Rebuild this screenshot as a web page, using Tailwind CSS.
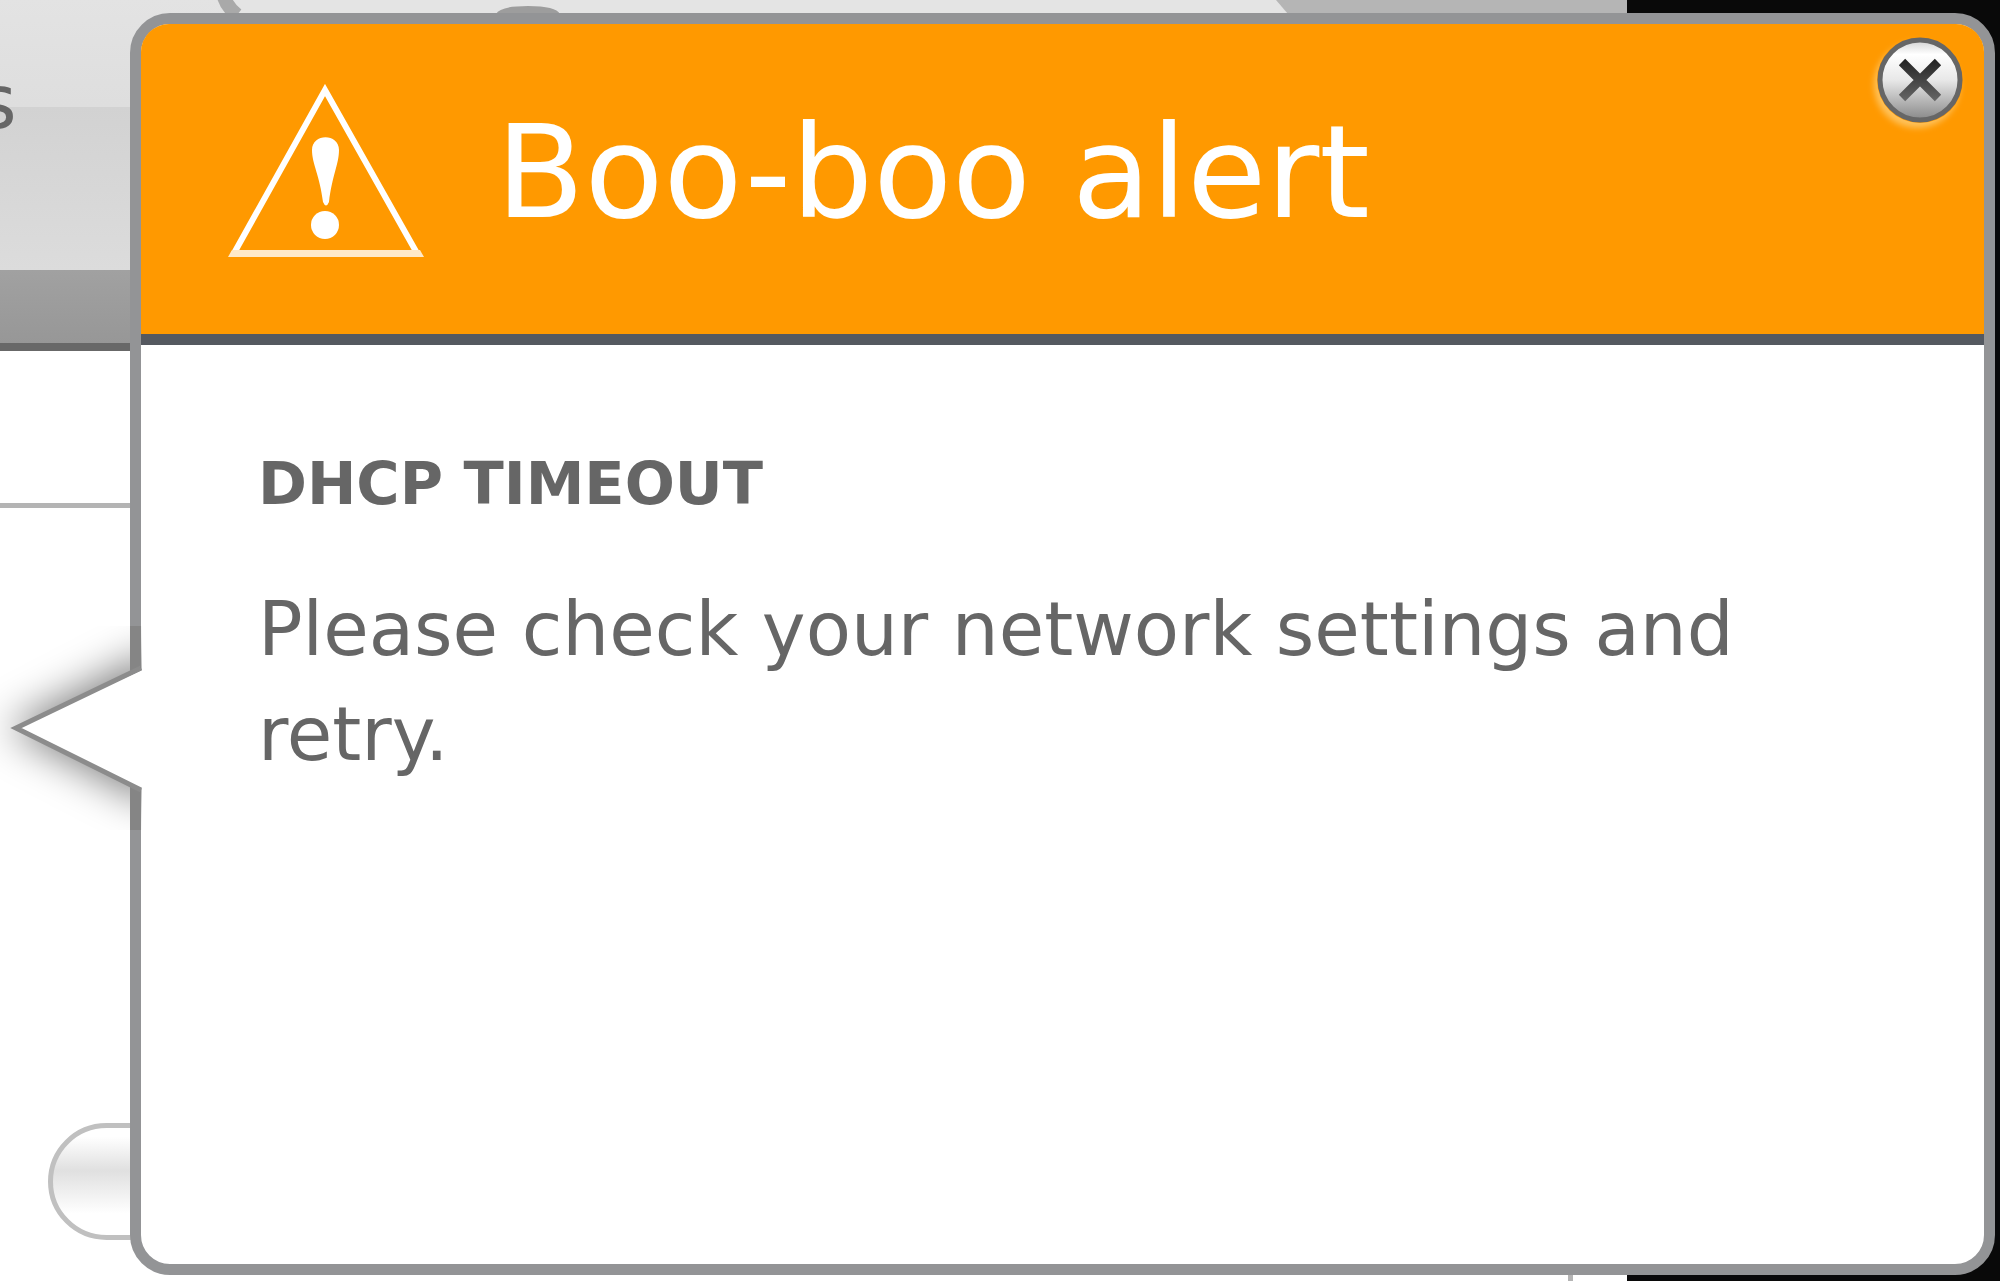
<!DOCTYPE html>
<html lang="en">
<head>
  <meta charset="UTF-8" />
  <meta name="viewport" content="width=device-width, initial-scale=1.0" />
  <title>Boo-boo alert</title>
  <script src="https://cdn.jsdelivr.net/npm/@tailwindcss/browser@4"></script>
</head>
<body class="relative flex min-h-screen overflow-x-hidden bg-white pt-[13px] pr-[5px] pb-[6px] pl-[130px] font-['DejaVu_Sans',sans-serif] text-[#666666]">

  <!-- Page behind the alert -->
  <div class="absolute inset-0 flex overflow-hidden">
    <div class="flex flex-1 flex-col">
      <!-- Tab bar -->
      <div class="relative h-[270px] shrink-0 overflow-hidden bg-linear-to-b from-[#e3e3e3] to-[#dedede] to-39%">
        <div class="mt-[107px] h-[163px] bg-linear-to-b from-[#d2d2d2] to-[#dcdcdc]"></div>
        <span class="absolute top-[65px] -left-[22px] text-[74px] leading-[74px]">s</span>
        <svg class="absolute top-0 left-0" width="1627" height="14" viewBox="0 0 1627 14" fill="none">
          <path d="M226 0h1052l8 14H240z" fill="#e4e4e4" />
          <path d="M1276 0h351v14h-339z" fill="#b5b5b5" />
          <path d="M224 -3q3 10 13 18" stroke="#a9a9a9" stroke-width="14" />
          <path d="M496 14q4-8 32-8t32 8z" fill="#9d9d9d" />
        </svg>
      </div>
      <div class="h-[81px] shrink-0 border-b-[8px] border-[#686868] bg-linear-to-b from-[#a1a1a1] to-[#979797]"></div>
      <div class="h-[157px] shrink-0 border-b-[5px] border-[#b4b4b4]"></div>
      <div class="flex flex-1 flex-col items-start justify-end pb-[41px] pl-[48px]">
        <button type="button" aria-label="Continue" class="h-[117px] w-[300px] rounded-full border-[5px] border-[#c0c0c0] bg-linear-to-b from-white from-8% via-[#e0e0e0] via-40% to-white to-80%"></button>
      </div>
      <div class="absolute bottom-0 left-[1568px] h-[10px] w-[5px] bg-[#b4b4b4]"></div>
    </div>
    <div class="w-[373px] bg-[#090909]"></div>
  </div>

  <!-- Alert -->
  <section role="alertdialog" aria-labelledby="alertTitle" class="relative flex-1 rounded-[40px] border-[11px] border-[#939496] bg-white">
    <header class="flex items-center gap-[72px] rounded-t-[28px] border-b-[11px] border-[#555960] bg-[#ff9900] pt-[60px] pb-[74px] pl-[87px]">
      <svg class="shrink-0" width="196" height="176" viewBox="0 0 196 176" fill="none">
        <path d="M5 171L97 6L190 171" stroke="#fff" stroke-width="6" />
        <path d="M0 173l4-7h188l4 7z" fill="#ffe9c8" />
        <path d="M84 66c0-17 27-17 27 0c0 14-7 26-10 52q-3 7-6 0c-3-26-11-38-11-52z" fill="#fff" />
        <circle cx="97" cy="141" r="14" fill="#fff" />
      </svg>
      <h1 id="alertTitle" class="text-[129px] leading-[130px] text-white">Boo-boo alert</h1>
    </header>

    <div class="pt-[109px] pr-[180px] pl-[117px]">
      <h2 class="text-[59px] leading-[60px] font-bold">DHCP TIMEOUT</h2>
      <p class="mt-[63px] text-[74px] leading-[105px]">Please check your network settings and retry.</p>
    </div>

    <button type="button" aria-label="Close" onclick="closeAlert()" class="absolute top-[13px] right-[21px] size-[86px] cursor-pointer rounded-full shadow-[-3px_5px_6px_#ffc35c]">
      <svg width="86" height="86" viewBox="0 0 86 86" fill="none">
        <defs>
          <linearGradient id="chrome" x1="0" y1="0" x2="0" y2="1">
            <stop offset="0" stop-color="#d0d0d0" />
            <stop offset=".18" stop-color="#ffffff" />
            <stop offset=".5" stop-color="#e8e8e8" />
            <stop offset="1" stop-color="#888888" />
          </linearGradient>
          <linearGradient id="cross" x1="0" y1="22" x2="0" y2="64" gradientUnits="userSpaceOnUse">
            <stop offset="0" stop-color="#222222" />
            <stop offset="1" stop-color="#666666" />
          </linearGradient>
        </defs>
        <circle cx="43" cy="43" r="40" fill="url(#chrome)" stroke="#666666" stroke-width="5" />
        <path d="M25 25L61 61M61 25L25 61" stroke="url(#cross)" stroke-width="9" />
      </svg>
    </button>

    <!-- Pointer -->
    <svg class="absolute top-[602px] -left-[141px]" width="142" height="204" viewBox="0 0 142 204" fill="none">
      <defs>
        <filter id="soft" x="-50%" y="-50%" width="200%" height="200%">
          <feGaussianBlur stdDeviation="20" />
        </filter>
      </defs>
      <path d="M6 102L160 22V182z" fill="#000" fill-opacity=".5" filter="url(#soft)" />
      <path d="M130 0h11v41l-11 5zM130 158l11 5v41h-11z" fill="#858585" />
      <path d="M142 44L16 102L142 163z" fill="#fff" />
      <path d="M141 42L16 102L141 164" stroke="#8c8c8c" stroke-width="5" />
    </svg>
  </section>

  <script>
    function closeAlert() {
      document.querySelector('[role=alertdialog]').classList.add('invisible');
    }
  </script>
</body>
</html>
